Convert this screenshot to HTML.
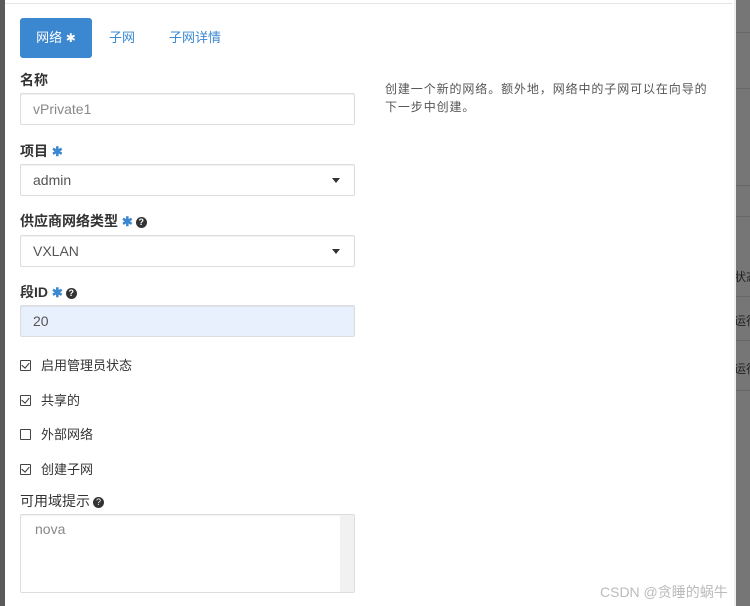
<!DOCTYPE html>
<html><head><meta charset="utf-8"><style>
*{box-sizing:border-box;margin:0;padding:0}
body{width:750px;height:606px;overflow:hidden;background:#fff;font-family:"Liberation Sans","Noto Sans CJK SC",sans-serif;position:relative;color:#333}
.lstrip{position:absolute;left:0;top:0;width:5px;height:606px;background:#5a5a5a}
.rover{position:absolute;left:736px;top:0;width:14px;height:606px;background:#767676;overflow:hidden}
.rover .ln{position:absolute;left:0;width:14px;height:1px;background:#666}
.rover span{position:absolute;left:-2px;font-size:12px;color:#222;white-space:nowrap}
.modal{position:absolute;left:5px;top:0;width:731px;height:606px;background:#fff;border-right:2px solid #eee}
.topline{position:absolute;left:5px;top:3px;width:727px;height:1px;background:#e5e5e5}
.tab{position:absolute;top:18px;height:40px;font-size:13px;line-height:40px}
.tab.act{left:20px;width:72px;background:#3b87d0;color:#fff;border-radius:3px;text-align:center}
.lbl{position:absolute;left:20px;font-size:14px;font-weight:bold;color:#333}
.star{color:#3b87d0;font-size:13px}
.q{display:inline-block;width:11px;height:11px;border-radius:50%;background:#333;color:#fff;font-size:9px;line-height:11px;text-align:center;vertical-align:1px;margin-left:3px}
.inp{position:absolute;left:20px;width:335px;height:32px;border:1px solid #ddd;border-radius:2px;font-size:14px;line-height:30px;padding-left:12px;color:#555;box-shadow:inset 0 1px 1px rgba(0,0,0,.06)}
.caret{position:absolute;right:14px;top:13px;border-left:4px solid transparent;border-right:4px solid transparent;border-top:5px solid #333}
.chk{position:absolute;left:20px;font-size:13px;color:#333}
.chk i{display:inline-block;width:11px;height:11px;border:1px solid #444;border-radius:1px;margin-right:10px;vertical-align:-1px;position:relative}
.chk i.c:after{content:"";position:absolute;left:2px;top:0px;width:4px;height:6px;border-right:1.5px solid #333;border-bottom:1.5px solid #333;transform:rotate(40deg)}
.help{position:absolute;left:385px;top:80px;font-size:12px;line-height:18px;color:#555;width:345px;white-space:nowrap;letter-spacing:0.9px}
.wm{position:absolute;left:600px;top:582px;font-size:14px;color:#bbb}
</style></head><body>
<div class="lstrip"></div>
<div class="modal"></div>
<div class="topline"></div>
<div class="rover">
<div class="ln" style="top:32px"></div><div class="ln" style="top:88px"></div><div class="ln" style="top:185px"></div><div class="ln" style="top:216px"></div><div class="ln" style="top:296px"></div><div class="ln" style="top:340px"></div><div class="ln" style="top:390px"></div>
<span style="top:268px">状态</span><span style="top:312px">运行</span><span style="top:360px">运行</span>
</div>
<div class="tab act">网络 <span style="font-size:12px">✱</span></div>
<div class="tab" style="left:109px;color:#3b87d0">子网</div>
<div class="tab" style="left:169px;color:#3b87d0">子网详情</div>

<div class="lbl" style="top:70px">名称</div>
<div class="inp" style="top:93px;color:#888">vPrivate1</div>
<div class="lbl" style="top:141px">项目 <span class="star">✱</span></div>
<div class="inp" style="top:164px">admin<div class="caret"></div></div>
<div class="lbl" style="top:211px">供应商网络类型 <span class="star">✱</span><span class="q">?</span></div>
<div class="inp" style="top:235px">VXLAN<div class="caret"></div></div>
<div class="lbl" style="top:282px">段ID <span class="star">✱</span><span class="q">?</span></div>
<div class="inp" style="top:305px;background:#e8f0fe">20</div>

<div class="chk" style="top:355px"><i class="c"></i>启用管理员状态</div>
<div class="chk" style="top:390px"><i class="c"></i>共享的</div>
<div class="chk" style="top:424px"><i></i>外部网络</div>
<div class="chk" style="top:459px"><i class="c"></i>创建子网</div>
<div class="lbl" style="top:491px;font-weight:normal">可用域提示<span class="q">?</span></div>
<div class="inp" style="top:514px;height:79px;line-height:28px;padding-left:14px;color:#888">nova
<div style="position:absolute;right:0;top:0;width:14px;height:77px;background:#f1f1f1"></div></div>

<div class="help">创建一个新的网络。额外地，网络中的子网可以在向导的<br>下一步中创建。</div>
<div class="wm">CSDN @贪睡的蜗牛</div>
</body></html>
